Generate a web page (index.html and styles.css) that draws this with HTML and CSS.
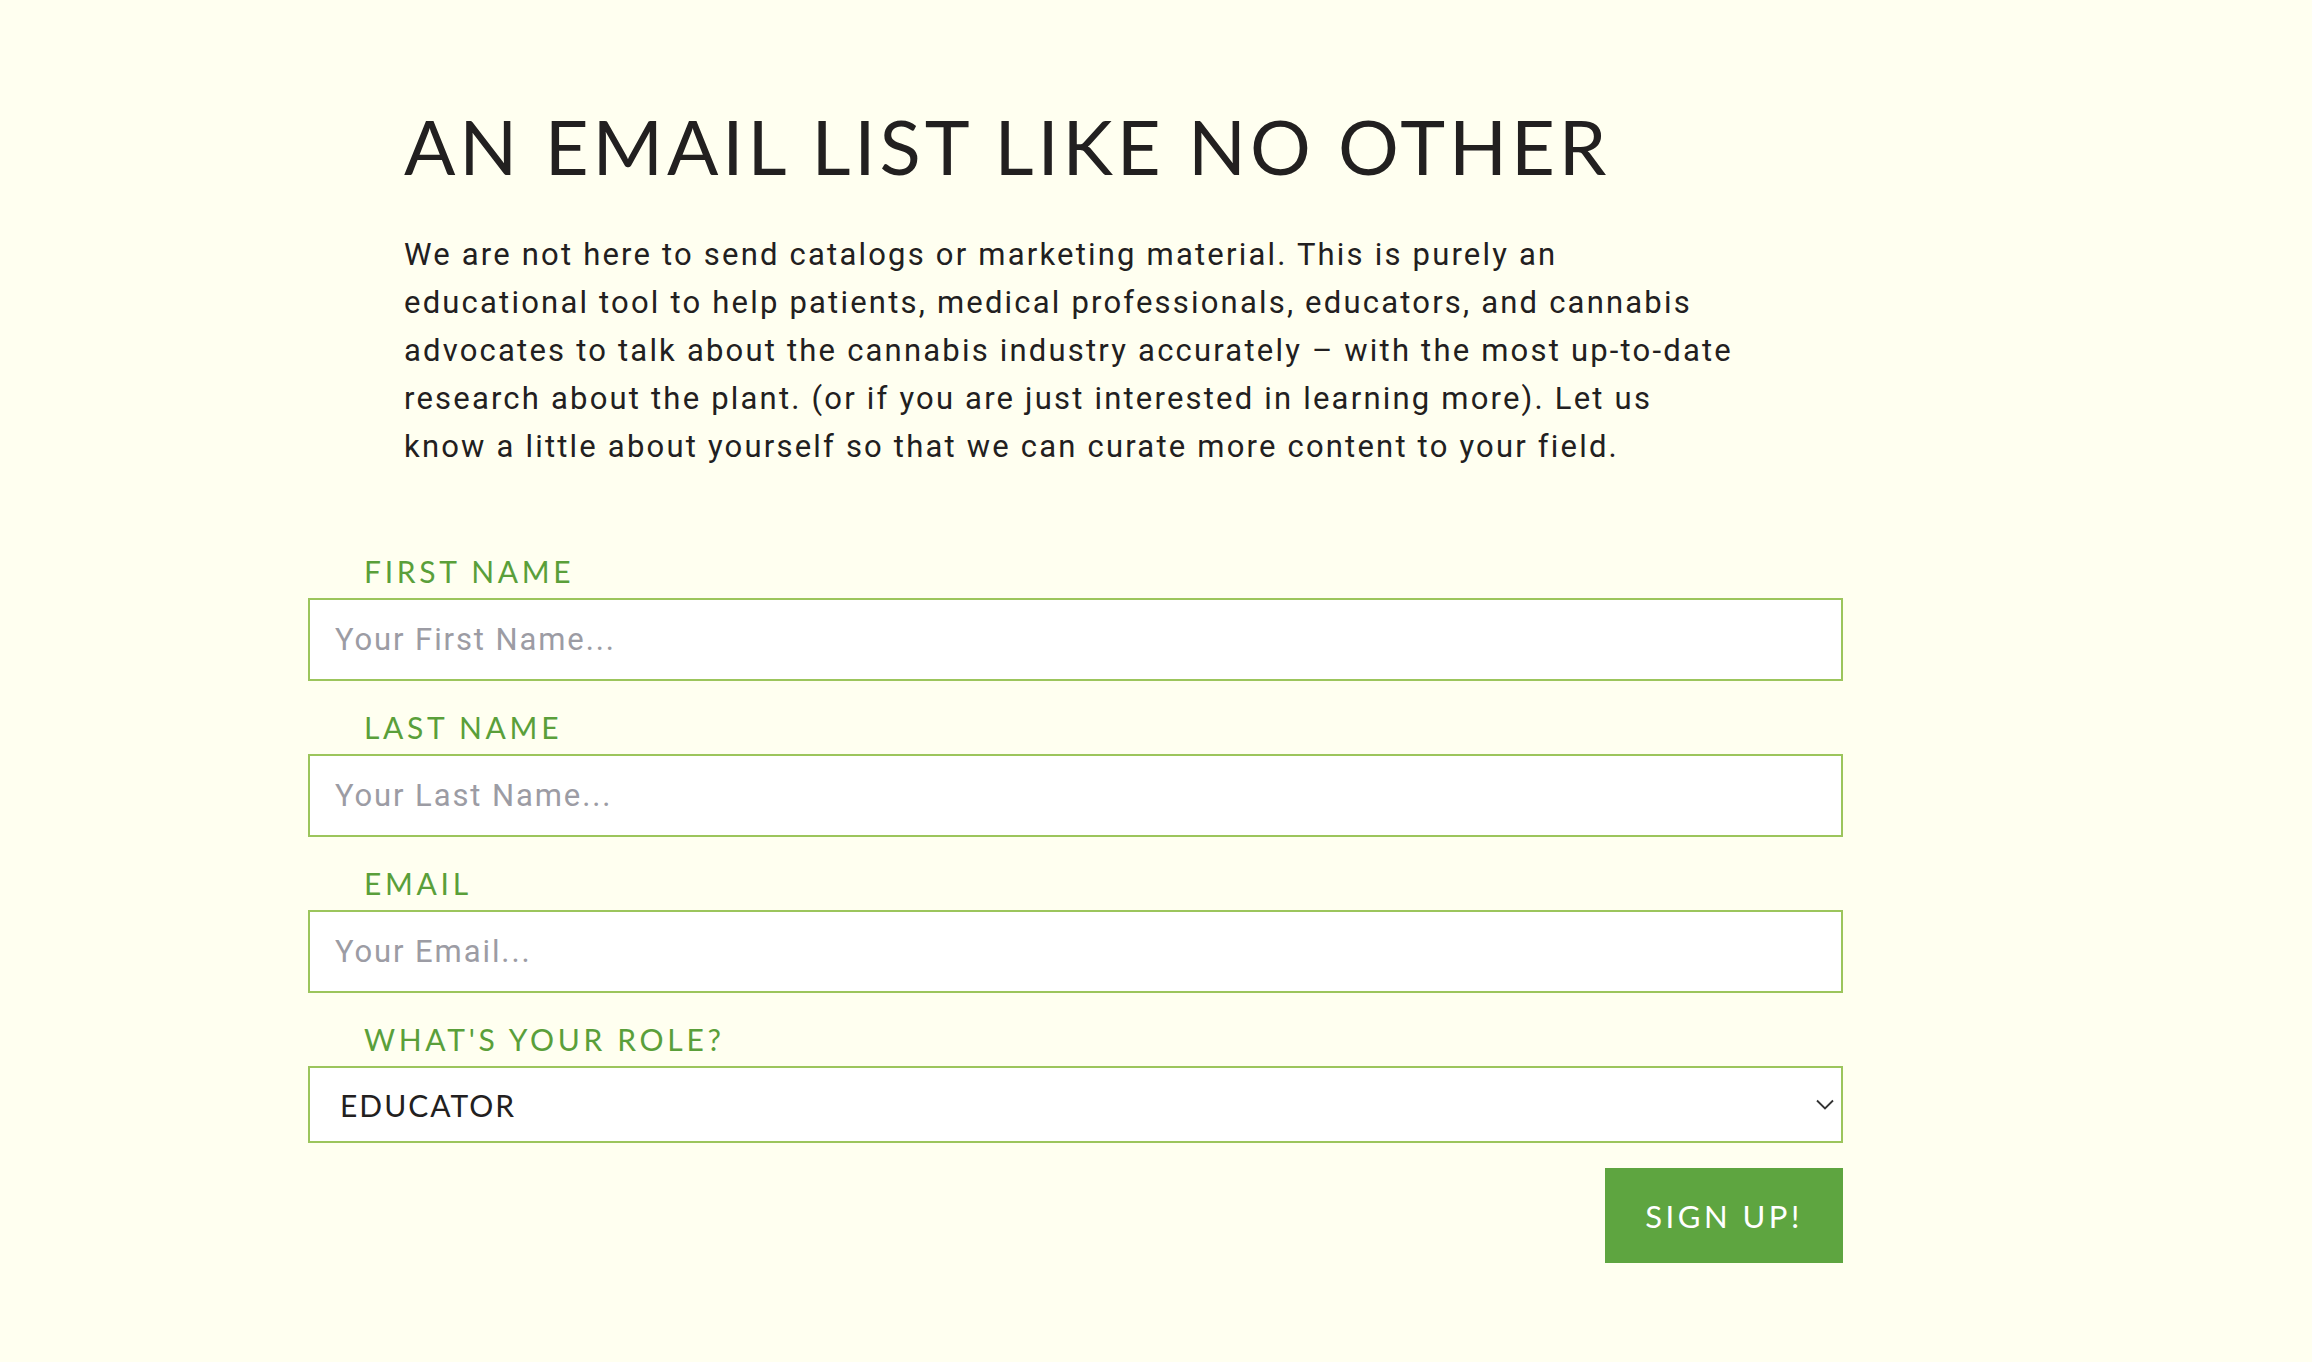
FILE: index.html
```html
<!DOCTYPE html>
<html lang="en">
<head>
<meta charset="utf-8">
<title>An Email List Like No Other</title>
<link rel="stylesheet" href="styles.css">
</head>
<body>
<main class="page">
  <section class="intro">
    <h1 class="title">AN EMAIL LIST LIKE NO OTHER</h1>
    <p class="lead">We are not here to send catalogs or marketing material. This is purely an<br>educational tool to help patients, medical professionals, educators, and cannabis<br>advocates to talk about the cannabis industry accurately – with the most up-to-date<br>research about the plant. (or if you are just interested in learning more). Let us<br>know a little about yourself so that we can curate more content to your field.</p>
  </section>
  <form class="signup">
    <label class="field">
      <span class="field-label">FIRST NAME</span>
      <input class="field-input" type="text" placeholder="Your First Name...">
    </label>
    <label class="field">
      <span class="field-label">LAST NAME</span>
      <input class="field-input" type="text" placeholder="Your Last Name...">
    </label>
    <label class="field">
      <span class="field-label">EMAIL</span>
      <input class="field-input" type="email" placeholder="Your Email...">
    </label>
    <label class="field">
      <span class="field-label">WHAT'S YOUR ROLE?</span>
      <span class="select-wrap">
        <select class="field-select">
          <option>EDUCATOR</option>
          <option>PATIENT</option>
          <option>MEDICAL PROFESSIONAL</option>
          <option>ADVOCATE</option>
        </select>
        <svg class="chevron" width="18" height="11" viewBox="0 0 18 11"><path d="M1 1.5 L9 9.5 L17 1.5" fill="none" stroke="#333" stroke-width="1.8"/></svg>
      </span>
    </label>
    <div class="actions">
      <button class="submit" type="button">SIGN UP!</button>
    </div>
  </form>
</main>
</body>
</html>
```

FILE: styles.css
```css
html, body {
  margin: 0;
  padding: 0;
  background: #fffff0;
}

.page {
  width: 1535px;
  margin-left: 308px;
  padding-top: 108px;
  padding-bottom: 98px;
}

.intro {
  padding-left: 96px;
}

.title {
  margin: 0;
  font-family: "Lato", "Liberation Sans", sans-serif;
  font-weight: 400;
  font-size: 76px;
  line-height: 1;
  letter-spacing: 3.9px;
  color: #222020;
}

.lead {
  margin: 47px 0 0;
  font-family: "Roboto", "Liberation Sans", sans-serif;
  font-size: 31px;
  line-height: 48px;
  letter-spacing: 2.2px;
  color: #222020;
}

.signup {
  margin-top: 83px;
  display: flex;
  flex-direction: column;
}

.field {
  display: flex;
  flex-direction: column;
  margin-bottom: 29px;
}

.field-label {
  padding-left: 56px;
  font-family: "Lato", "Liberation Sans", sans-serif;
  font-size: 30px;
  line-height: 34px;
  letter-spacing: 3.7px;
  color: #5a9f3a;
  margin-bottom: 10px;
}

.field-input {
  box-sizing: border-box;
  height: 83px;
  width: 100%;
  margin: 0;
  border: 2px solid #9cc55c;
  border-radius: 0;
  background: #ffffff;
  padding: 0 25px;
  font-family: "Roboto", "Liberation Sans", sans-serif;
  font-size: 31px;
  letter-spacing: 1.9px;
  color: #222;
  outline: none;
}

.field-input::placeholder {
  color: #9c9ca4;
}

.select-wrap {
  position: relative;
  display: block;
}

.field-select {
  box-sizing: border-box;
  width: 100%;
  height: 77px;
  margin: 0;
  border: 2px solid #9cc55c;
  border-radius: 0;
  background: #ffffff;
  padding: 0 30px;
  font-family: "Lato", "Liberation Sans", sans-serif;
  font-size: 30px;
  letter-spacing: 2px;
  color: #222020;
  -webkit-appearance: none;
  appearance: none;
  outline: none;
}

.chevron {
  position: absolute;
  right: 9px;
  top: 33px;
  pointer-events: none;
}

.actions {
  display: flex;
  justify-content: flex-end;
  margin-top: -4px;
}

.submit {
  width: 238px;
  height: 95px;
  border: 0;
  border-radius: 0;
  background: #5ea540;
  color: #ffffff;
  font-family: "Lato", "Liberation Sans", sans-serif;
  font-size: 31px;
  letter-spacing: 3.5px;
  padding: 0;
  cursor: pointer;
}
```
